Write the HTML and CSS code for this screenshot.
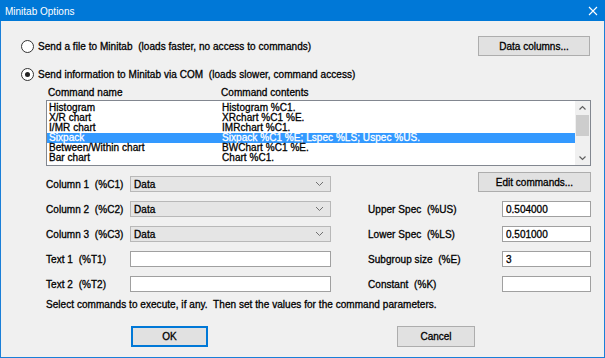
FILE: index.html
```html
<!DOCTYPE html>
<html lang="en">
<head>
  <meta charset="UTF-8">
  <title>Minitab Options</title>
  <link rel="stylesheet" href="styles.css">
</head>
<body>
  <div class="window">
    <div class="titlebar">
      <span class="title">Minitab Options</span>
      <svg class="close" width="10" height="10" viewBox="0 0 10 10">
        <path d="M1 1 L9 9 M9 1 L1 9" stroke="#fff" stroke-width="1.1" fill="none"/>
      </svg>
    </div>

    <div class="client">
      <div class="mode-row first">
        <label class="radio"><span class="dot"></span>Send a file to Minitab&nbsp; (loads faster, no access to commands)</label>
        <button class="btn btn-data" type="button">Data columns...</button>
      </div>

      <div class="mode-row second">
        <label class="radio"><span class="dot checked"></span>Send information to Minitab via COM&nbsp; (loads slower, command access)</label>
      </div>

      <div class="list-head">
        <span class="col-name">Command name</span>
        <span>Command contents</span>
      </div>

      <div class="listbox">
        <div class="rows">
          <div class="row"><span class="col-name">Histogram</span><span>Histogram %C1.</span></div>
          <div class="row"><span class="col-name">X/R chart</span><span>XRchart %C1 %E.</span></div>
          <div class="row"><span class="col-name">I/MR chart</span><span>IMRchart %C1.</span></div>
          <div class="row selected"><span class="col-name">Sixpack</span><span>Sixpack %C1 %E; Lspec %LS; Uspec %US.</span></div>
          <div class="row"><span class="col-name">Between/Within chart</span><span>BWChart %C1 %E.</span></div>
          <div class="row"><span class="col-name">Bar chart</span><span>Chart %C1.</span></div>
        </div>
        <div class="scrollbar">
          <svg class="arrow" width="15" height="14" viewBox="0 0 15 14">
            <path d="M4.5 8.5 L7.5 5.5 L10.5 8.5" stroke="#606060" stroke-width="1.2" fill="none"/>
          </svg>
          <div class="thumb"></div>
          <div class="track"></div>
          <svg class="arrow" width="15" height="14" viewBox="0 0 15 14">
            <path d="M4.5 5.5 L7.5 8.5 L10.5 5.5" stroke="#606060" stroke-width="1.2" fill="none"/>
          </svg>
        </div>
      </div>

      <div class="params">
        <span class="lbl">Column 1&nbsp; (%C1)</span>
        <div class="combo"><span>Data</span><svg width="9" height="6" viewBox="0 0 9 6"><path d="M1 1 L4.5 4.5 L8 1" stroke="#707070" fill="none"/></svg></div>
        <span></span>
        <button class="btn btn-edit" type="button">Edit commands...</button>

        <span class="lbl">Column 2&nbsp; (%C2)</span>
        <div class="combo"><span>Data</span><svg width="9" height="6" viewBox="0 0 9 6"><path d="M1 1 L4.5 4.5 L8 1" stroke="#707070" fill="none"/></svg></div>
        <span></span>
        <span class="lbl">Upper Spec&nbsp; (%US)</span>
        <input class="field" type="text" value="0.504000">

        <span class="lbl">Column 3&nbsp; (%C3)</span>
        <div class="combo"><span>Data</span><svg width="9" height="6" viewBox="0 0 9 6"><path d="M1 1 L4.5 4.5 L8 1" stroke="#707070" fill="none"/></svg></div>
        <span></span>
        <span class="lbl">Lower Spec&nbsp; (%LS)</span>
        <input class="field" type="text" value="0.501000">

        <span class="lbl">Text 1&nbsp; (%T1)</span>
        <input class="field" type="text">
        <span></span>
        <span class="lbl">Subgroup size&nbsp; (%E)</span>
        <input class="field" type="text" value="3">

        <span class="lbl">Text 2&nbsp; (%T2)</span>
        <input class="field" type="text">
        <span></span>
        <span class="lbl">Constant&nbsp; (%K)</span>
        <input class="field" type="text">
      </div>

      <p class="hint">Select commands to execute, if any.&nbsp; Then set the values for the command parameters.</p>

      <div class="actions">
        <button class="btn btn-ok" type="button">OK</button>
        <button class="btn btn-cancel" type="button">Cancel</button>
      </div>
    </div>
  </div>
</body>
</html>
```

FILE: styles.css
```css
body {
  margin: 0;
  font-family: "Liberation Sans", Arial, sans-serif;
  font-size: 10px;
  color: #000;
}

.window {
  width: 605px;
  height: 358px;
  box-sizing: border-box;
  border: 1px solid #1a7fd8;
  border-top: none;
  background: #f0f0f0;
}

.titlebar {
  height: 21px;
  margin: 0 -1px;
  background: #0078d7;
  color: #fff;
  display: flex;
  align-items: center;
  justify-content: space-between;
  padding: 0 7px 0 5px;
}

.title {
  font-size: 10px;
  padding-top: 1px;
}

.client {
  padding: 0 0 0 20px;
  -webkit-text-stroke: 0.3px #000;
  letter-spacing: 0.05px;
}

.mode-row {
  display: flex;
  align-items: center;
  justify-content: space-between;
  padding-right: 14px;
}

.mode-row.first {
  margin-top: 15px;
  height: 20px;
}

.mode-row.second {
  margin-top: 11px;
  height: 14px;
}

.radio {
  display: flex;
  align-items: center;
  white-space: pre;
}

.dot {
  width: 11px;
  height: 11px;
  border: 1px solid #333;
  border-radius: 50%;
  background: #fff;
  margin-right: 4px;
  display: flex;
  align-items: center;
  justify-content: center;
  -webkit-text-stroke: 0;
}

.dot.checked::after {
  content: "";
  width: 5px;
  height: 5px;
  border-radius: 50%;
  background: #222;
}

.btn {
  font-family: "Liberation Sans", Arial, sans-serif;
  font-size: 10px;
  color: #000;
  -webkit-text-stroke: 0.3px #000;
  background: #e1e1e1;
  border: 1px solid #adadad;
  padding: 0;
  height: 20px;
}

.btn-data {
  width: 112px;
}

.list-head {
  margin: 6px 0 0 27px;
  height: 12px;
  line-height: 12px;
  display: flex;
}

.col-name {
  width: 173px;
  flex: none;
}

.listbox {
  margin: 1px 13px 0 25px;
  height: 66px;
  box-sizing: border-box;
  border: 1px solid #828790;
  background: #fff;
  display: flex;
}

.rows {
  flex: 1;
  padding-top: 2px;
}

.row {
  display: flex;
  height: 10px;
  line-height: 10px;
  padding-left: 2px;
  white-space: nowrap;
}

.row.selected {
  background: #3399ff;
  color: #fff;
  -webkit-text-stroke: 0.3px #fff;
}

.scrollbar {
  width: 15px;
  background: #f0f0f0;
  display: flex;
  flex-direction: column;
}

.arrow {
  flex: none;
}

.thumb {
  height: 21px;
  margin: 0 1px;
  background: #cdcdcd;
}

.track {
  flex: 1;
}

.params {
  margin: 10px 0 0 25px;
  display: grid;
  grid-template-columns: 84px 201px 37px 134px 89px;
  grid-auto-rows: 16px;
  row-gap: 9px;
  align-items: center;
}

.lbl {
  white-space: pre;
}

.combo {
  height: 16px;
  box-sizing: border-box;
  border: 1px solid #b8b8b8;
  background: #e5e5e5;
  display: flex;
  align-items: center;
  justify-content: space-between;
  padding: 0 6px 0 3px;
}

.btn-edit {
  grid-column: 4 / 6;
  justify-self: end;
  align-self: end;
  width: 113px;
  margin-top: -4px;
}

.field {
  height: 16px;
  box-sizing: border-box;
  border: 1px solid #a0a0a0;
  background: #fff;
  font-family: "Liberation Sans", Arial, sans-serif;
  font-size: 10px;
  -webkit-text-stroke: 0.3px #000;
  padding: 0 3px;
  margin: 0;
  outline: none;
}

.params > .field:nth-child(5n+2) {
  width: 201px;
}

.hint {
  margin: 7px 0 0 25px;
  height: 12px;
  line-height: 12px;
  white-space: pre;
}

.actions {
  margin-top: 15px;
  padding-left: 110px;
  display: flex;
  gap: 189px;
}

.btn-ok {
  width: 77px;
  height: 21px;
  border: 2px solid #0078d7;
}

.btn-cancel {
  width: 78px;
  height: 21px;
}
```
